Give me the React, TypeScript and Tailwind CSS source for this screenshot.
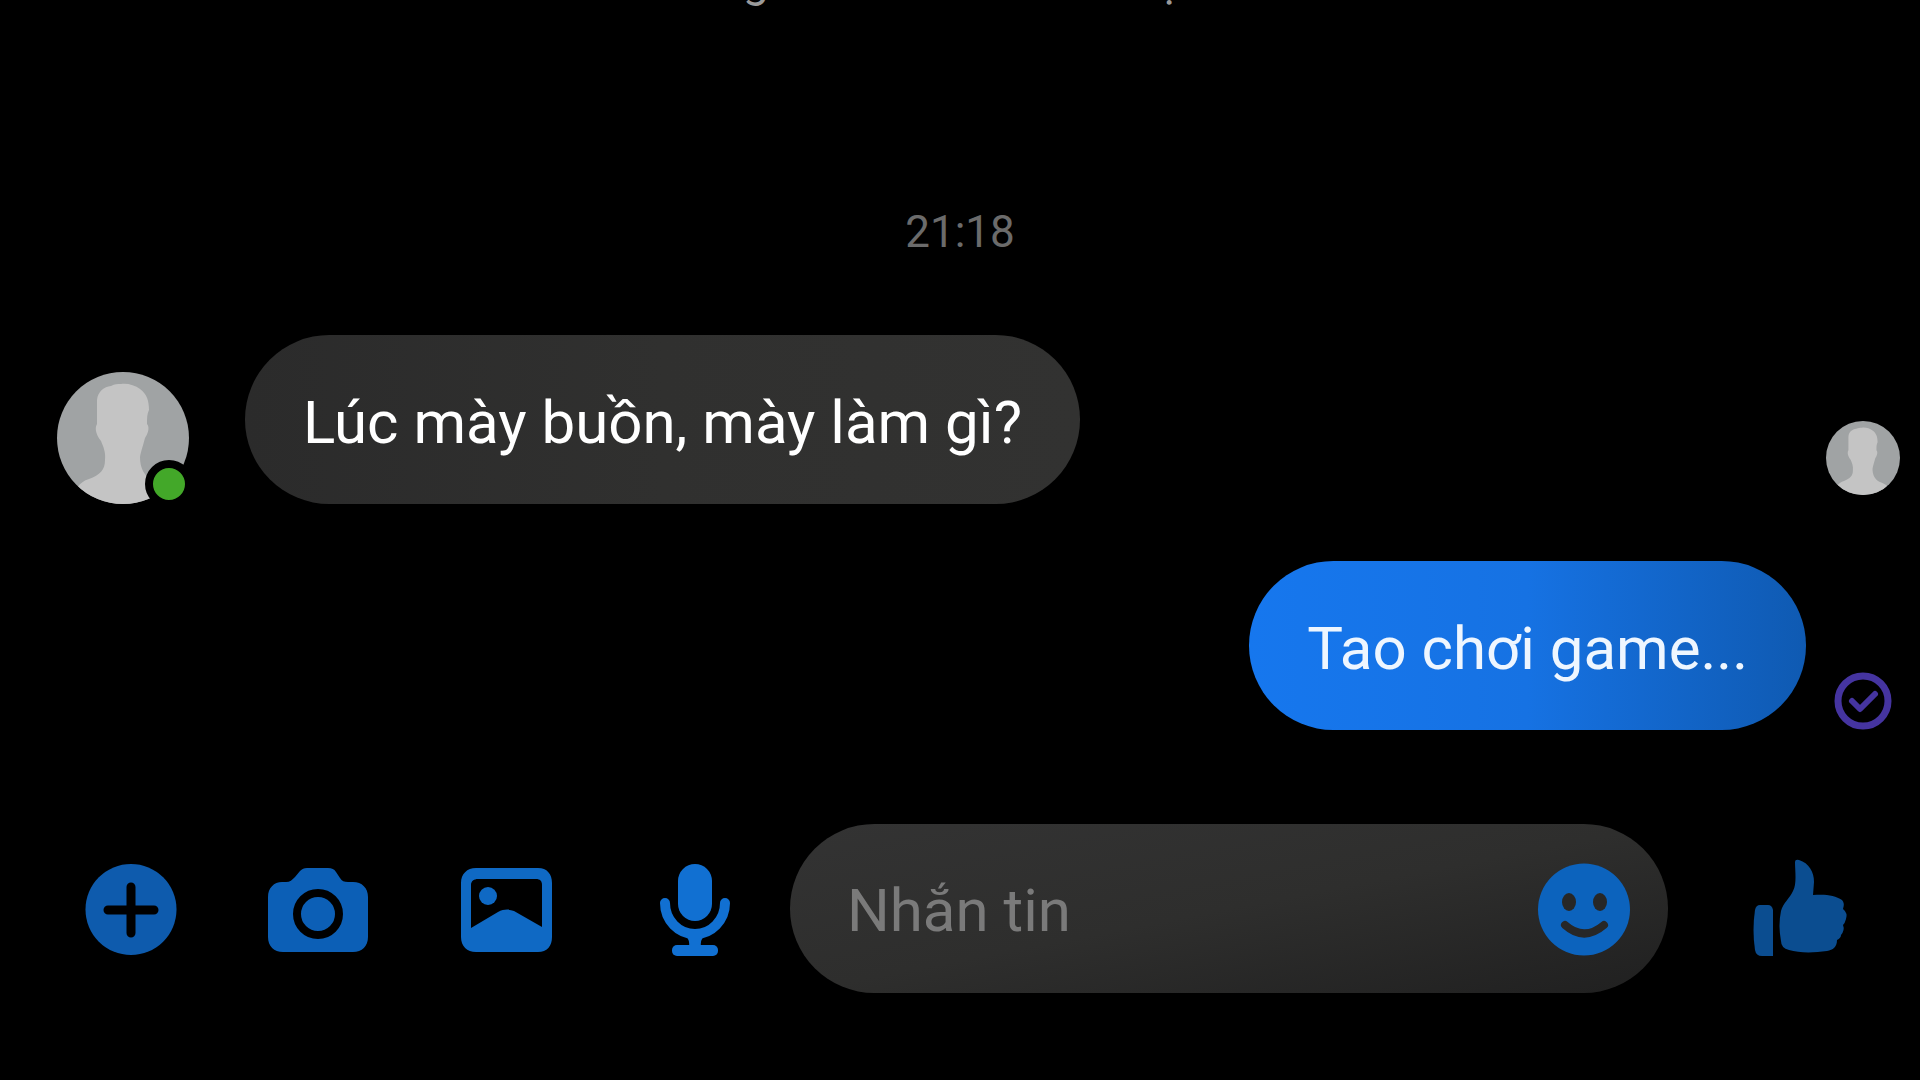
import { useState } from 'react'
import type { ReactNode } from 'react'

interface IconProps {
  label: string
  className: string
  children: ReactNode
}

function IconButton({ label, className, children }: IconProps) {
  return (
    <button type="button" aria-label={label} className={`h-[100px] w-[100px] shrink-0 ${className}`}>
      <svg viewBox="0 0 100 100" className="h-full w-full" fill="currentColor" aria-hidden="true">
        {children}
      </svg>
    </button>
  )
}

// Default profile silhouette, clipped by the round wrapper
function Silhouette() {
  return (
    <svg viewBox="0 0 132 132" className="h-full w-full rounded-full bg-[#a0a3a4]" aria-hidden="true">
      <path
        fill="#c4c4c4"
        d="M64 12C70 11 78 13 83 17C90 22 92 29 92 38C90 42 90 46 90 52C93 55 91 62 88 66C86 74 84 79 83 85C83 96 87 104 96 109C106 113 114 117 122 132H14C17 118 22 110 32 107C43 103 48 98 48 88C49 80 46 74 44 69C40 64 37 57 40 52V28C41 19 47 15 54 14C58 12 60 12 64 12Z"
      />
    </svg>
  )
}

function Composer() {
  const [text, setText] = useState('')

  return (
    <form className="mt-[94px] flex items-center pr-[72px] pl-20" onSubmit={e => e.preventDefault()}>
      <div className="flex shrink-0 gap-[88px]">
        <IconButton label="Thêm" className="text-[#0e5bad]">
          <circle cx="51" cy="50.5" r="45.5" />
          <path d="M51 28V74M28 51H74" stroke="#000" strokeWidth="9" strokeLinecap="round" />
        </IconButton>

        <IconButton label="Máy ảnh" className="text-[#0c5fb6]">
          <path d="M14 23H18C22 23 24 21 27 18L32 12C34 10 36 9 39 9H60C64 9 66 10 68 13L72 19C74 22 76 23 80 23H85C94 23 100 29 100 38V78C100 87 94 93 85 93H15C6 93 0 87 0 78V38C0 29 6 23 14 23Z" />
          <circle cx="50" cy="55" r="21" fill="none" stroke="#000" strokeWidth="8" />
        </IconButton>

        <IconButton label="Ảnh" className="text-[#0f69c4]">
          <path
            fillRule="evenodd"
            d="M20 9H82C91 9 96 15 96 24V78C96 87 91 93 82 93H20C11 93 5 87 5 78V24C5 15 11 9 20 9ZM22 20C18 20 15 22 15 26V69L42 53C48 50 53 50 58 52L86 68V26C86 22 84 20 80 20Z"
          />
          <circle cx="32" cy="37" r="9" />
        </IconButton>

        <IconButton label="Ghi âm" className="text-[#1170d2]">
          <rect x="34" y="5" width="34" height="57" rx="17" />
          <path d="M21 44A30 31 0 0 0 81 44" fill="none" stroke="currentColor" strokeWidth="10" strokeLinecap="round" />
          <path d="M42 77H60Q56 81 57 88H45Q46 81 42 77Z" />
          <rect x="28" y="86" width="46" height="11" rx="5" />
        </IconButton>
      </div>

      <div className="ml-[46px] flex h-[169px] min-w-0 flex-1 items-center rounded-full bg-linear-to-br from-[#333333] via-[#2e2e2d] to-[#202020] pr-[34px] pl-[57px]">
        <input
          type="text"
          aria-label="Nhắn tin"
          placeholder="Nhắn tin"
          value={text}
          onChange={e => setText(e.target.value)}
          className="h-full min-w-0 flex-1 bg-transparent pt-1 text-[60px] text-white outline-none placeholder:text-[#7a7a7a]"
        />
        <IconButton label="Biểu tượng cảm xúc" className="text-[#0c63bd]">
          <circle cx="50" cy="50.5" r="46" />
          <ellipse cx="35" cy="43" rx="7" ry="9" fill="#272727" />
          <ellipse cx="66" cy="43" rx="7" ry="9" fill="#272727" />
          <path d="M31 66Q50 83 70 66" fill="none" stroke="#272727" strokeWidth="8" strokeLinecap="round" />
        </IconButton>
      </div>

      <IconButton label="Thích" className="ml-20 text-[#0b4d90]">
        <path d="M12 46H20Q24 46 25 51V97H14Q8 97 7 91Q4 71 7 51Q8 46 12 46Z" />
        <path d="M47 3Q47 0 51 1C61 4 66 13 66 23L65 36C77 35 87 36 94 41Q97 44 95 50Q100 54 98 60Q97 64 95 66Q97 71 93 76Q93 79 89 81C89 88 85 91 79 92C65 94 51 94 41 91Q33 89 33 82Q30 66 33 52C35 44 42 39 45 32C49 25 47 12 47 3Z" />
      </IconButton>
    </form>
  )
}

export default function App() {
  return (
    <div className="min-h-screen overflow-hidden bg-black font-['Roboto','Noto_Sans',sans-serif]">
      {/* Tail of the line scrolled off above */}
      <div className="mx-auto flex h-1 w-[446px] items-end justify-between pl-1.5 text-[46px] leading-none text-[#9a9a9a]">
        <span>g</span>
        <span>ạ</span>
      </div>

      <main>
        <p className="mt-[201px] text-center text-[44px] leading-[54px] text-[#6b6b6b]">
          <time>21:18</time>
        </p>

        <div className="mt-[76px] flex items-end pr-5 pl-[57px]">
          <div className="relative h-[132px] w-[132px] shrink-0">
            <Silhouette />
            <span className="absolute -right-1 -bottom-1 h-12 w-12 rounded-full border-8 border-black bg-[#43a829]" />
          </div>
          <p className="ml-14 rounded-full bg-linear-to-r from-[#2b2b2b] via-[#30302f] to-[#323231] px-[58px] pt-[51px] pb-[45px] text-[60px] leading-[73px] text-white">
            Lúc mày buồn, mày làm gì?
          </p>
          <div className="mb-[9px] ml-auto h-[74px] w-[74px] shrink-0">
            <Silhouette />
          </div>
        </div>

        <div className="mt-[57px] flex items-end justify-end gap-7 pr-7">
          <p className="rounded-full bg-linear-to-r from-[#1677ee] via-[#1672e3] to-[#0f5ab2] px-[58px] pt-[51px] pb-[45px] text-[60px] leading-[73px] text-[#eef6ff]">
            Tao chơi game...
          </p>
          <svg viewBox="0 0 58 58" className="h-[58px] w-[58px] shrink-0" fill="none" stroke="#4534a0" role="img" aria-label="Đã gửi">
            <circle cx="29" cy="29" r="25" strokeWidth="7" />
            <path d="M18 29L26 37L41 22" strokeWidth="6" strokeLinecap="round" strokeLinejoin="round" />
          </svg>
        </div>
      </main>

      <Composer />
    </div>
  )
}
